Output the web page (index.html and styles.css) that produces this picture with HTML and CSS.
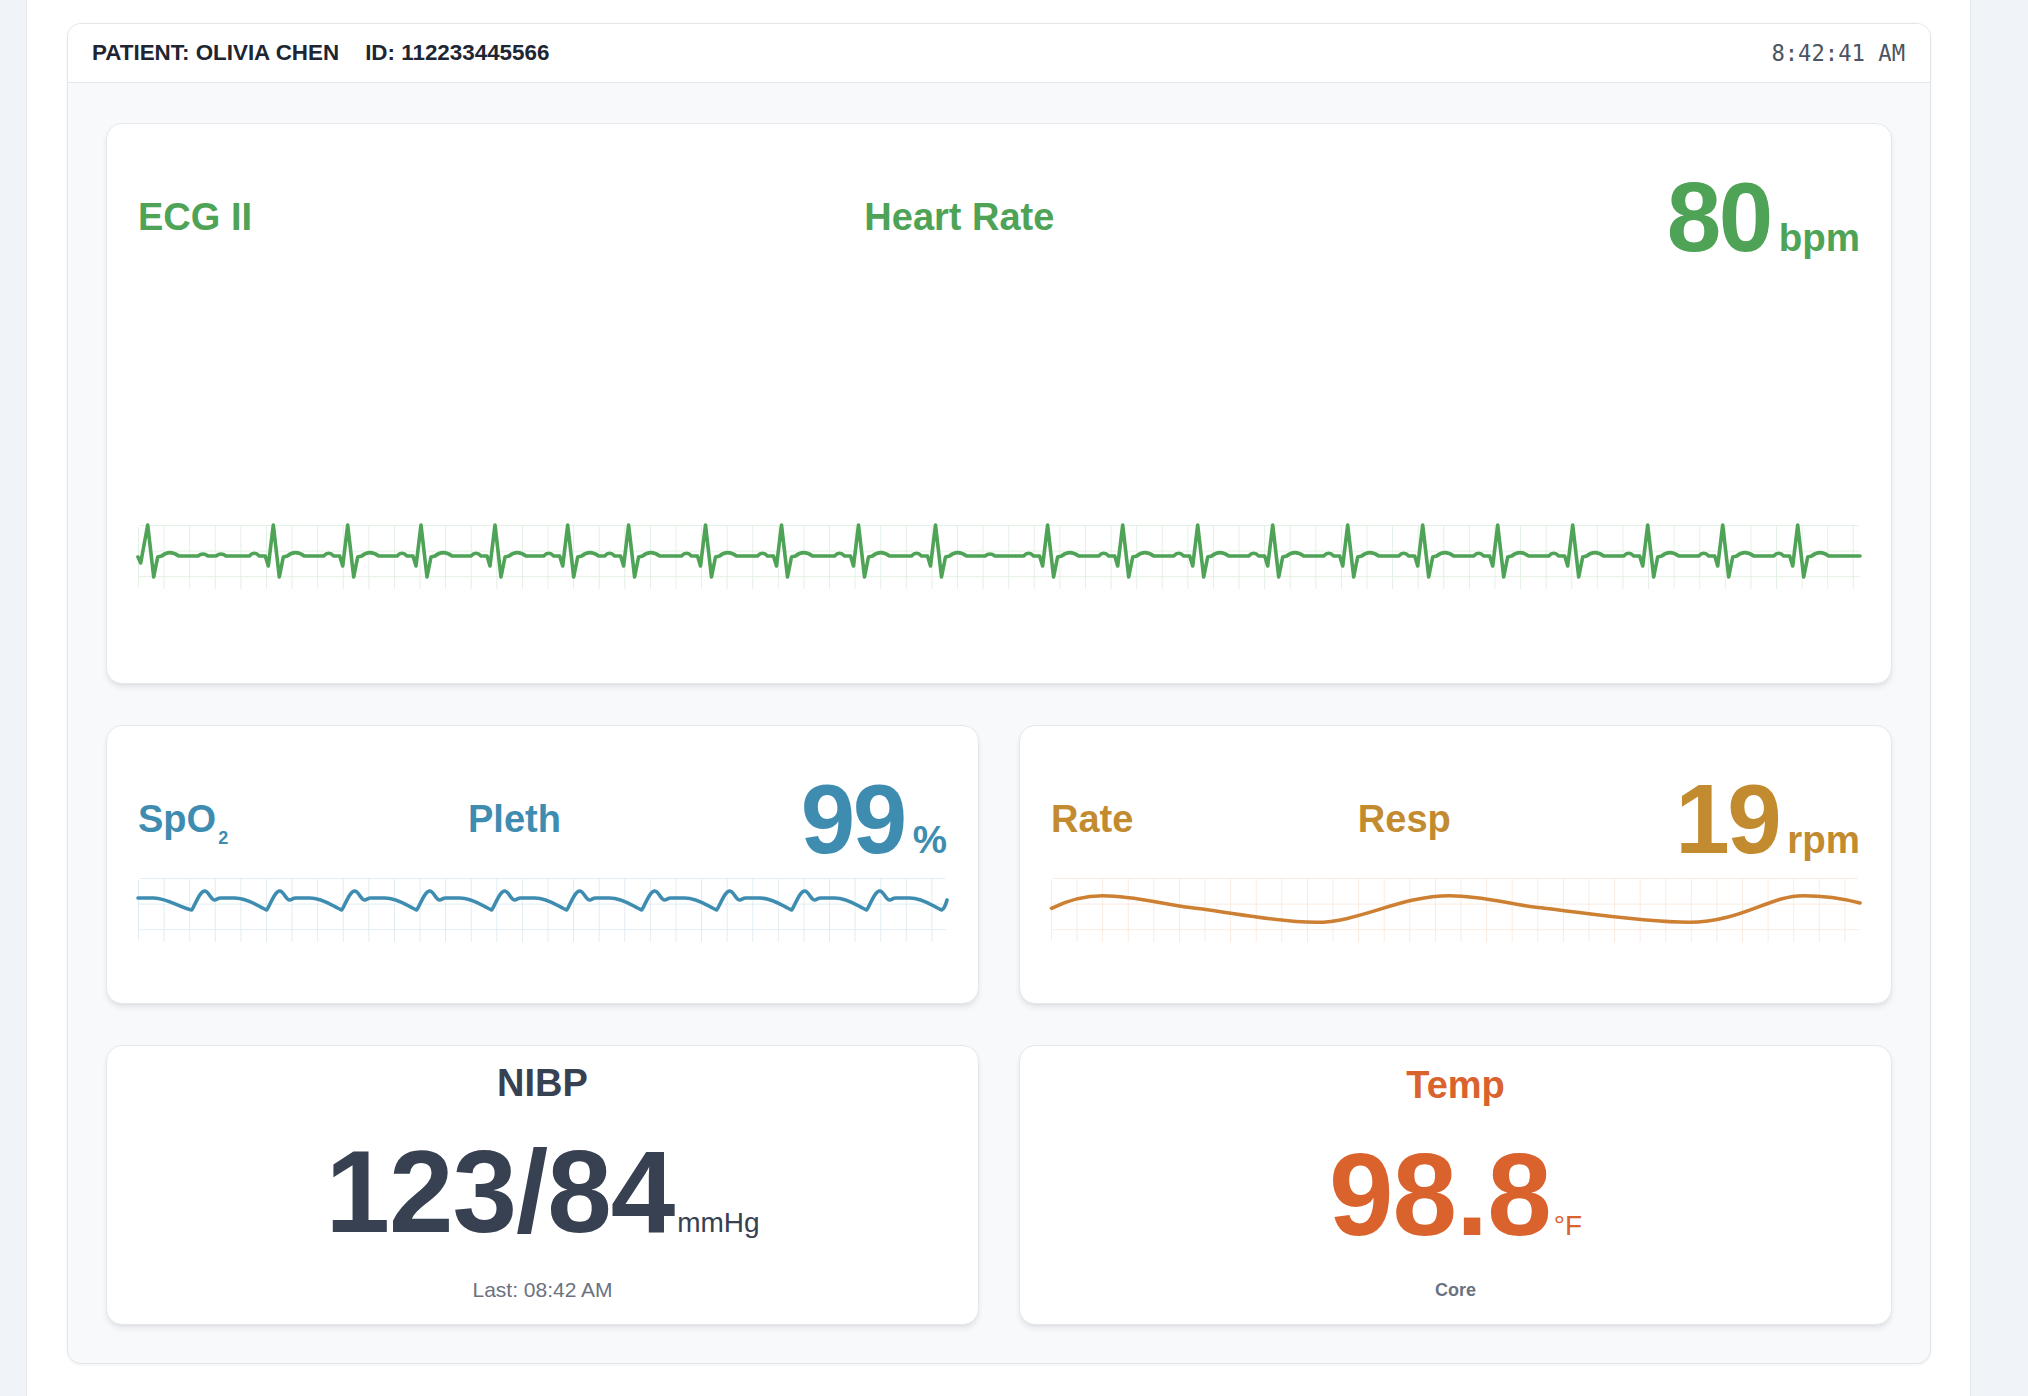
FILE: index.html
```html
<!DOCTYPE html>
<html lang="en">
<head>
<meta charset="utf-8">
<title>Patient Monitor</title>
<link rel="stylesheet" href="styles.css">
</head>
<body>
<div class="page">
  <div class="monitor">
    <header class="bar">
      <div class="patient"><span>PATIENT: OLIVIA CHEN</span><span>ID: 112233445566</span></div>
      <div class="clock">8:42:41 AM</div>
    </header>
    <main class="panels">
      <section class="card wave-card ecg">
        <div class="head">
          <div class="title">ECG II</div>
          <div class="title">Heart Rate</div>
          <div class="reading"><span class="num">80</span><span class="unit">bpm</span></div>
        </div>
        <div class="trace trace-ecg">
          <svg class="wave" viewBox="138 525 1722 64" preserveAspectRatio="none">
            <path d="M138,557 L140.7,563 L147.7,525 l6,52 l4,-20 l4,-1 q8,-6.6 17,0 L198,556 q5,-4 10,0 L216,556 q5,-4 10,0
            L249.3,556 q5,-5.5 10,0 l6,0 l3,10 l5,-41 l6,52 l4,-20 l4,-1 q8,-6.6 17,0
            L323.7,556 q5,-5.5 10,0 l6,0 l3,10 l5,-41 l6,52 l4,-20 l4,-1 q8,-6.6 17,0
            L397,556 q5,-5.5 10,0 l6,0 l3,10 l5,-41 l6,52 l4,-20 l4,-1 q8,-6.6 17,0
            L471,556 q5,-5.5 10,0 l6,0 l3,10 l5,-41 l6,52 l4,-20 l4,-1 q8,-6.6 17,0
            L543.7,556 q5,-5.5 10,0 l6,0 l3,10 l5,-41 l6,52 l4,-20 l4,-1 q8,-6.6 17,0
            L604.6,556 q5,-5.5 10,0 l6,0 l3,10 l5,-41 l6,52 l4,-20 l4,-1 q8,-6.6 17,0
            L681.5,556 q5,-5.5 10,0 l6,0 l3,10 l5,-41 l6,52 l4,-20 l4,-1 q8,-6.6 17,0
            L757.5,556 q5,-5.5 10,0 l6,0 l3,10 l5,-41 l6,52 l4,-20 l4,-1 q8,-6.6 17,0
            L834.5,556 q5,-5.5 10,0 l6,0 l3,10 l5,-41 l6,52 l4,-20 l4,-1 q8,-6.6 17,0
            L911.5,556 q5,-5.5 10,0 l6,0 l3,10 l5,-41 l6,52 l4,-20 l4,-1 q8,-6.6 17,0
            L985,556 q5,-4 10,0
            L1023.6,556 q5,-5.5 10,0 l6,0 l3,10 l5,-41 l6,52 l4,-20 l4,-1 q8,-6.6 17,0
            L1098.7,556 q5,-5.5 10,0 l6,0 l3,10 l5,-41 l6,52 l4,-20 l4,-1 q8,-6.6 17,0
            L1173.7,556 q5,-5.5 10,0 l6,0 l3,10 l5,-41 l6,52 l4,-20 l4,-1 q8,-6.6 17,0
            L1248.7,556 q5,-5.5 10,0 l6,0 l3,10 l5,-41 l6,52 l4,-20 l4,-1 q8,-6.6 17,0
            L1323.7,556 q5,-5.5 10,0 l6,0 l3,10 l5,-41 l6,52 l4,-20 l4,-1 q8,-6.6 17,0
            L1398.7,556 q5,-5.5 10,0 l6,0 l3,10 l5,-41 l6,52 l4,-20 l4,-1 q8,-6.6 17,0
            L1473.7,556 q5,-5.5 10,0 l6,0 l3,10 l5,-41 l6,52 l4,-20 l4,-1 q8,-6.6 17,0
            L1548.7,556 q5,-5.5 10,0 l6,0 l3,10 l5,-41 l6,52 l4,-20 l4,-1 q8,-6.6 17,0
            L1623.7,556 q5,-5.5 10,0 l6,0 l3,10 l5,-41 l6,52 l4,-20 l4,-1 q8,-6.6 17,0
            L1698.7,556 q5,-5.5 10,0 l6,0 l3,10 l5,-41 l6,52 l4,-20 l4,-1 q8,-6.6 17,0
            L1773.7,556 q5,-5.5 10,0 l6,0 l3,10 l5,-41 l6,52 l4,-20 l4,-1 q8,-6.6 17,0
            L1860,556"/>
          </svg>
        </div>
      </section>

      <section class="card wave-card spo2">
        <div class="head">
          <div class="title">SpO<sub>2</sub></div>
          <div class="title">Pleth</div>
          <div class="reading"><span class="num">99</span><span class="unit">%</span></div>
        </div>
        <div class="trace trace-pleth">
          <svg class="wave" viewBox="138 879 809 64" preserveAspectRatio="none">
            <path d="M138,899 h16 c12,0 25,9 37.7,12
            c3,-4 8,-19 13,-19 c4,0 6,9 10,9 c2,0 3,-2 6,-2 h14 c14,0 24,9 32,12
            c3,-4 8,-19 13,-19 c4,0 6,9 10,9 c2,0 3,-2 6,-2 h14 c14,0 24,9 32,12
            c3,-4 8,-19 13,-19 c4,0 6,9 10,9 c2,0 3,-2 6,-2 h14 c14,0 24,9 32,12
            c3,-4 8,-19 13,-19 c4,0 6,9 10,9 c2,0 3,-2 6,-2 h14 c14,0 24,9 32,12
            c3,-4 8,-19 13,-19 c4,0 6,9 10,9 c2,0 3,-2 6,-2 h14 c14,0 24,9 32,12
            c3,-4 8,-19 13,-19 c4,0 6,9 10,9 c2,0 3,-2 6,-2 h14 c14,0 24,9 32,12
            c3,-4 8,-19 13,-19 c4,0 6,9 10,9 c2,0 3,-2 6,-2 h14 c14,0 24,9 32,12
            c3,-4 8,-19 13,-19 c4,0 6,9 10,9 c2,0 3,-2 6,-2 h14 c14,0 24,9 32,12
            c3,-4 8,-19 13,-19 c4,0 6,9 10,9 c2,0 3,-2 6,-2 h14 c14,0 24,9 32,12
            c3,-4 8,-19 13,-19 c4,0 6,9 10,9 c2,0 3,-2 6,-2 h14 c14,0 24,9 32,12
            c2,-1 4,-5 5.3,-10"/>
          </svg>
        </div>
      </section>

      <section class="card wave-card resp">
        <div class="head">
          <div class="title">Rate</div>
          <div class="title">Resp</div>
          <div class="reading"><span class="num">19</span><span class="unit">rpm</span></div>
        </div>
        <div class="trace trace-resp">
          <svg class="wave" viewBox="1051 879 809 64" preserveAspectRatio="none">
            <path d="M1051.5,909.3 C1068,901 1086,896.7 1103,896.7 C1135,896.7 1160,905 1190,908.5 C1230,913 1275,923.3 1316,923.3 C1360,923.3 1400,896.7 1450,896.7 C1482,896.7 1508,905 1538,908.5 C1580,913 1640,923.3 1689,923.3 C1740,923.3 1770,896.7 1803,896.7 C1825,896.7 1845,900 1860,904"/>
          </svg>
        </div>
      </section>

      <section class="card stat-card nibp">
        <div class="title">NIBP</div>
        <div class="big-row"><span class="big">123/84</span><span class="big-unit">mmHg</span></div>
        <div class="foot">Last: 08:42 AM</div>
      </section>

      <section class="card stat-card temp">
        <div class="title">Temp</div>
        <div class="big-row"><span class="big">98.8</span><span class="big-unit">°F</span></div>
        <div class="foot foot-bold">Core</div>
      </section>
    </main>
  </div>
</div>
</body>
</html>
```

FILE: styles.css
```css
* { box-sizing: border-box; }

html, body {
  margin: 0;
  padding: 0;
}

body {
  width: 2028px;
  min-height: 1396px;
  background: #f0f3f7;
  font-family: "Liberation Sans", Arial, Helvetica, sans-serif;
  color: #1f2937;
}

.page {
  margin-left: 26px;
  width: 1945px;
  min-height: 1396px;
  background: #ffffff;
  border-left: 1px solid #e6e9ee;
  border-right: 1px solid #e6e9ee;
  padding: 23px 39px 0 40px;
}

.monitor {
  width: 1864px;
  height: 1341px;
  background: #f8f9fb;
  border: 1px solid #e2e5ea;
  border-radius: 14px;
  box-shadow: 0 1px 3px rgba(15, 23, 42, 0.06);
  overflow: hidden;
}

/* top bar */
.bar {
  height: 59px;
  background: #ffffff;
  border-bottom: 1px solid #e5e7eb;
  display: flex;
  align-items: center;
  justify-content: space-between;
  padding: 0 25px 0 24px;
}

.patient {
  display: flex;
  gap: 26px;
  font-size: 22.4px;
  font-weight: 700;
  color: #1e2533;
}

.clock {
  font-family: "DejaVu Sans Mono", "Liberation Mono", monospace;
  font-size: 22.2px;
  color: #4b5563;
}

/* panels */
.panels {
  display: grid;
  grid-template-columns: 1fr 1fr;
  grid-template-rows: 561px 279px 280px;
  column-gap: 40px;
  row-gap: 41px;
  padding: 40px 38px 38px;
}

.card {
  background: #ffffff;
  border: 1px solid #e5e7eb;
  border-radius: 16px;
  box-shadow: 0 4px 6px -1px rgba(15, 23, 42, 0.09), 0 2px 4px -2px rgba(15, 23, 42, 0.06);
}

.ecg { grid-column: 1 / 3; }

.wave-card {
  display: flex;
  flex-direction: column;
  padding: 44px 31px 0;
}

.head {
  display: flex;
  align-items: center;
  justify-content: space-between;
}

.title {
  font-size: 38px;
  font-weight: 700;
  line-height: 44px;
}

.title sub {
  font-size: 18px;
  line-height: 0;
  vertical-align: -12px;
  margin-left: 2px;
}

.reading {
  display: flex;
  align-items: baseline;
  gap: 8px;
}

.num {
  font-size: 98px;
  font-weight: 700;
  line-height: 98px;
  letter-spacing: -2.5px;
}

.unit {
  font-size: 38.5px;
  font-weight: 700;
}

.trace {
  height: 64px;
  border-radius: 4px;
  background-size: 25.6px 25.6px;
  background-image:
    linear-gradient(to right, var(--grid) 1.2px, transparent 1.2px),
    linear-gradient(to bottom, var(--grid) 1.2px, transparent 1.2px);
}

.trace-ecg { margin-top: 259px; --grid: #e3f0e4; }
.trace-pleth { margin-top: 10px; --grid: #e1edf3; }
.trace-resp { margin-top: 10px; --grid: #faebe0; }

.wave {
  display: block;
  width: 100%;
  height: 100%;
  overflow: visible;
}

.wave path {
  fill: none;
  stroke-width: 3.6;
  stroke-linejoin: round;
  stroke-linecap: round;
}

.ecg { color: #4ea356; }
.ecg .wave path { stroke: #4ea356; }

.spo2 { color: #3e8db1; }
.spo2 .wave path { stroke: #3e8db1; }

.resp { color: #c38b30; }
.resp .wave path { stroke: #cd7f32; }

/* stat cards */
.stat-card {
  display: flex;
  flex-direction: column;
  align-items: center;
  justify-content: flex-start;
}

.stat-card .title { line-height: normal; }

.nibp { padding-top: 16px; }
.temp { padding-top: 18px; }

.big-row {
  display: flex;
  align-items: baseline;
}

.nibp .big-row { margin-top: 29px; }
.temp .big-row { margin-top: 30px; }

.big {
  font-size: 116px;
  font-weight: 700;
  line-height: 116px;
  letter-spacing: -1px;
}

.big-unit {
  font-size: 28px;
  margin-left: 3px;
}

.foot {
  margin-top: 28px;
  font-size: 21px;
  color: #6b7280;
}

.foot-bold {
  margin-top: 27px;
  font-size: 18px;
  font-weight: 700;
}

.nibp { color: #374151; }
.temp { color: #da622c; }
```
